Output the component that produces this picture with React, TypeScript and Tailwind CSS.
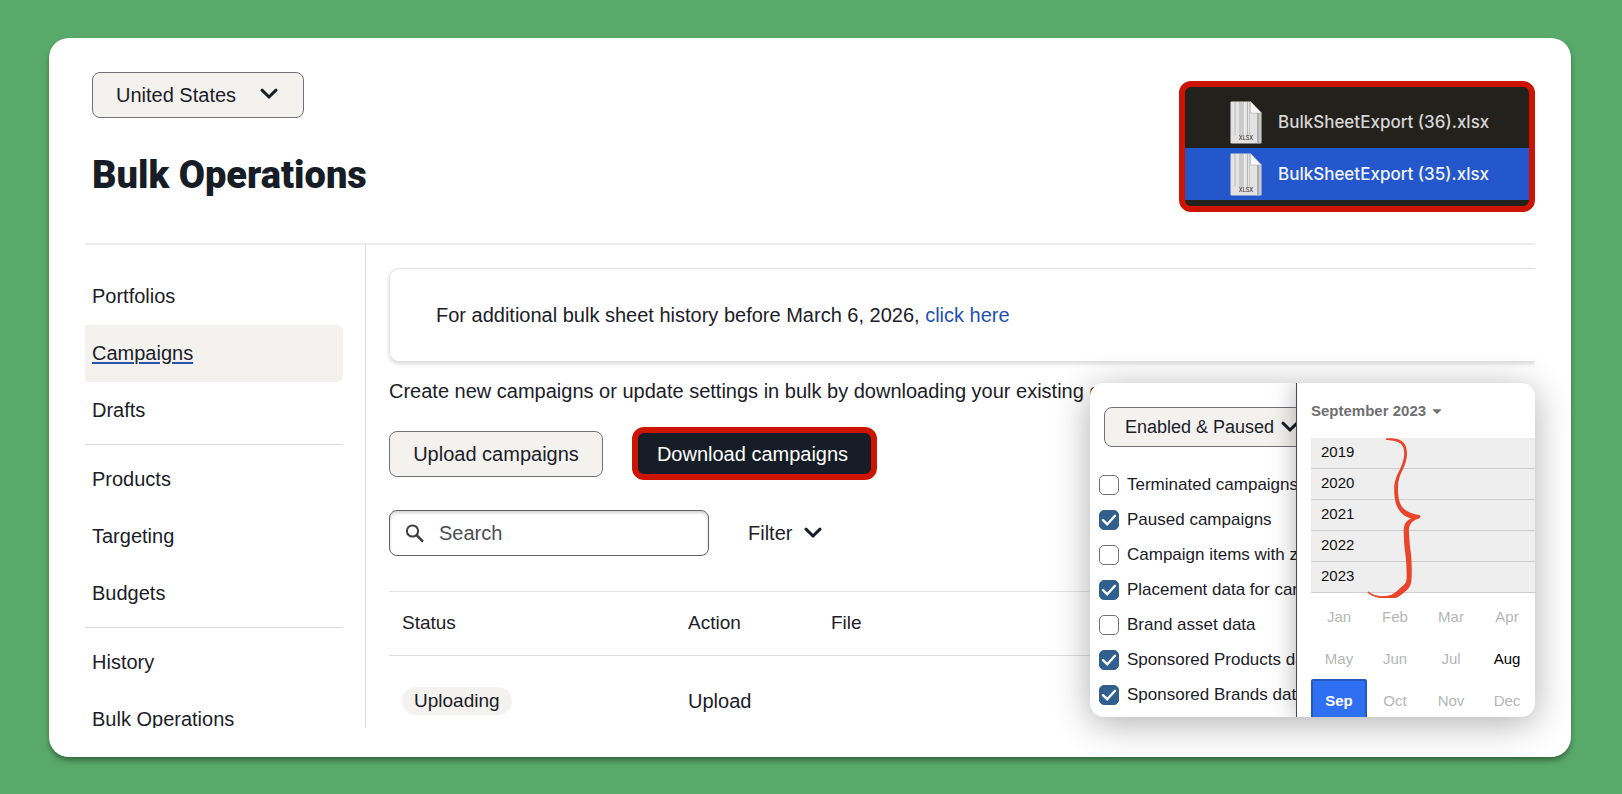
import { useState } from "react";
import { FaCaretDown } from "react-icons/fa";

const navGroups = [
  ["Portfolios", "Campaigns", "Drafts"],
  ["Products", "Targeting", "Budgets"],
  ["History", "Bulk Operations"],
];

const exportOptions = [
  { label: "Terminated campaigns", checked: false },
  { label: "Paused campaigns", checked: true },
  { label: "Campaign items with zero impressions", checked: false },
  { label: "Placement data for campaigns", checked: true },
  { label: "Brand asset data", checked: false },
  { label: "Sponsored Products data", checked: true },
  { label: "Sponsored Brands data", checked: true },
];

const years = ["2019", "2020", "2021", "2022", "2023"];
const months = ["Jan", "Feb", "Mar", "Apr", "May", "Jun", "Jul", "Aug", "Sep", "Oct", "Nov", "Dec"];

const Chevron = ({ className }: { className: string }) => (
  <svg viewBox="0 0 18 12" className={className} fill="none" aria-hidden="true">
    <path d="M2 2.2 L9 9 L16 2.2" stroke="#161d26" strokeWidth="3" strokeLinecap="round" />
  </svg>
);

const FileIcon = () => (
  <svg viewBox="0 0 32 43" className="h-[43px] w-8 shrink-0" aria-hidden="true">
    <path d="M1.5 0.5 H20.5 L31.5 12 V41.5 Q31.5 42.5 30.5 42.5 H1.5 Q0.5 42.5 0.5 41.5 V1.5 Q0.5 0.5 1.5 0.5 Z" fill="#e2e2e2" />
    <rect x="4" y="1" width="2" height="33" fill="#cfcfcf" />
    <rect x="9" y="1" width="5" height="33" fill="#cbcbcb" />
    <rect x="14" y="1" width="1" height="33" fill="#f2f2f2" />
    <rect x="17" y="1" width="1" height="33" fill="#b9b9b9" />
    <rect x="19" y="1" width="1" height="33" fill="#c9c9c9" />
    <rect x="27" y="12" width="2" height="30" fill="#adadad" />
    <rect x="29" y="12" width="2" height="30" fill="#c8c8c8" />
    <path d="M20.5 0.5 V12 H31.5 Z" fill="#fafafa" stroke="#a8a8a8" strokeWidth="0.5" />
    <text x="16" y="39" textAnchor="middle" fontSize="5.5" fontFamily="Inter, sans-serif" fill="#333">
      XLSX
    </text>
  </svg>
);

const Brace = () => (
  <svg viewBox="0 0 56 164" className="pointer-events-none absolute -top-1 left-[56px] h-[164px] w-14" aria-hidden="true">
    <path
      fill="#e8452a"
      d="M19 4.4 C29 4 40 5 40 19 C40.2 33 30.9 39 31 53 C31 68 33 77 49 80.4 Q54 80.4 53.4 83.2 Q53 84.4 49 85.6 C40 90 42 97 42.4 105 C43 117 45.4 120 44.6 145 C44.2 154 39 157 34 161 C27 166.4 21 165.5 14 164.2 C7 163 3 161 0.4 158.4 L1.2 157.6 C6 161.5 12 162.6 18 162 C25 161.6 28 159 32 155 C37 150.6 39.4 150 39.6 144 C40 121 37.2 118 37 105 C36.6 96 35.6 90 42 85.6 L44 84.4 C31 81 27 69 27.2 55 C27.6 39 37 34 37.2 19 C37.2 7.8 29 6.6 19 6 Z"
    />
  </svg>
);

const FileExports = () => (
  <div className="h-[131px] w-[356px] overflow-hidden rounded-xl border-6 border-[#cc1400] bg-[#23211c] font-[Inter,sans-serif] text-[17px] font-medium">
    <div className="flex h-[61px] items-end gap-4 pb-1 pl-[45px] text-[#d6d6d6]">
      <FileIcon />
      <span className="leading-[43px]">BulkSheetExport (36).xlsx</span>
    </div>
    <div className="flex h-[52px] items-end gap-4 bg-[#2457cc] pb-1 pl-[45px] text-[#f2f5fc]">
      <FileIcon />
      <span className="leading-[43px]">BulkSheetExport (35).xlsx</span>
    </div>
  </div>
);

const Sidebar = () => (
  <nav className="w-[281px] shrink-0 border-r border-[#dedede] pt-[23px] pr-[22px]">
    {navGroups.map((group, i) => (
      <ul key={i} className={i > 0 ? "mt-[5px] border-t border-[#dcdcdc] pt-[6px]" : ""}>
        {group.map((item) => (
          <li key={item}>
            <a
              href="#"
              className={
                item === "Campaigns"
                  ? "block rounded-r-md bg-[#f4f2ef] pl-[7px] leading-[57px] underline decoration-[#2a50a8] underline-offset-2"
                  : "block pl-[7px] leading-[57px]"
              }
            >
              {item}
            </a>
          </li>
        ))}
      </ul>
    ))}
  </nav>
);

const DownloadPanel = () => {
  const [options, setOptions] = useState(exportOptions);

  const toggle = (label: string) =>
    setOptions(options.map((o) => (o.label === label ? { ...o, checked: !o.checked } : o)));

  return (
    <div className="absolute right-9 bottom-10 flex h-[334px] w-[445px] overflow-hidden rounded-[14px] bg-white shadow-[0_6px_36px_rgba(0,0,0,0.32)]">
      <div className="w-[206px] shrink-0 overflow-hidden pt-6 pl-[9px]">
        <div className="relative ml-[5px] w-[220px]">
          <select
            aria-label="Campaign state"
            className="h-10 w-full appearance-none rounded-lg border border-[#6f7378] bg-[#f4f2ef] pl-5 text-lg"
          >
            <option>Enabled &amp; Paused</option>
          </select>
          <Chevron className="pointer-events-none absolute top-[14px] left-[177px] h-3 w-[18px]" />
        </div>
        <div className="mt-5 w-[340px] text-[17px]">
          {options.map((o) => (
            <label key={o.label} className="flex h-[35px] items-center gap-2">
              <span className="relative size-5">
                <input
                  type="checkbox"
                  checked={o.checked}
                  onChange={() => toggle(o.label)}
                  className="block size-5 appearance-none rounded-[5px] border border-[#6f7378] bg-white checked:border-[#31608f] checked:bg-[#31608f]"
                />
                {o.checked && (
                  <svg viewBox="0 0 20 20" className="pointer-events-none absolute inset-0" fill="none" aria-hidden="true">
                    <path d="M4 10.2 L8.2 14.2 L16 5.8" stroke="#fff" strokeWidth="2.4" strokeLinecap="round" />
                  </svg>
                )}
              </span>
              {o.label}
            </label>
          ))}
        </div>
      </div>
      <div className="relative min-w-0 flex-1 border-l border-[#4a4a4a] bg-white pl-[14px] text-[15px] text-[#111] shadow-[0_0_24px_rgba(0,0,0,0.3)]">
        <button className="flex h-[55px] items-center gap-1 font-bold text-[#707070]">
          September 2023
          <FaCaretDown className="size-[14px]" />
        </button>
        <div className="relative">
          <ul className="bg-[#eee]">
            {years.map((year) => (
              <li key={year} className="h-[31px] border-b border-[#ccc] pl-[10px] leading-[28px]">
                {year}
              </li>
            ))}
          </ul>
          <Brace />
        </div>
        <div className="grid grid-cols-4 pt-[2px]">
          {months.map((month) => (
            <button
              key={month}
              className={
                month === "Sep"
                  ? "h-[42px] rounded-t-[2px] border-2 border-[#2559bd] bg-[#2f6ff2] font-bold text-white"
                  : month === "Aug"
                    ? "h-[42px] text-black"
                    : "h-[42px] text-[#b5b5b5]"
              }
            >
              {month}
            </button>
          ))}
        </div>
      </div>
    </div>
  );
};

const CampaignTable = () => (
  <table className="mt-[35px] w-full table-fixed border-t border-[#e2e2e2] text-left">
    <thead>
      <tr className="h-16 border-b border-[#dedede] text-[19px]">
        <th className="w-[286px] pl-[13px] font-normal">Status</th>
        <th className="w-[143px] pl-[13px] font-normal">Action</th>
        <th className="pl-[13px] font-normal">File</th>
      </tr>
    </thead>
    <tbody>
      <tr className="h-[90px]">
        <td className="pl-[13px]">
          <span className="inline-block rounded-full bg-[#f4f2ef] px-3 text-[19px] leading-[28px]">Uploading</span>
        </td>
        <td className="pl-[13px]">Upload</td>
        <td />
      </tr>
    </tbody>
  </table>
);

export default function App() {
  return (
    <div className="flex h-screen bg-[#59aa6a] pt-[38px] pr-[51px] pb-[37px] pl-[49px] font-['Liberation_Sans',Arial,sans-serif] text-xl text-[#1b2028]">
      <div className="relative flex min-w-0 flex-1 flex-col rounded-[20px] bg-white px-9 pt-[34px] pb-[29px] shadow-[0_4px_6px_-1px_rgba(0,0,0,0.45)]">
        <header className="flex h-[173px] shrink-0 items-start justify-between border-b-2 border-[#ececec]">
          <div className="pl-[7px]">
            <div className="relative w-[212px]">
              <select
                aria-label="Country"
                className="block h-[46px] w-full appearance-none rounded-lg border border-[#6f7378] bg-[#f4f2ef] pl-[23px]"
              >
                <option>United States</option>
              </select>
              <Chevron className="pointer-events-none absolute top-4 left-[168px] h-3 w-[18px]" />
            </div>
            <h1 className="mt-[33px] font-[Roboto,sans-serif] text-[38px] leading-12 font-black text-[#161d26]">
              Bulk Operations
            </h1>
          </div>
          <div className="pt-[9px]">
            <FileExports />
          </div>
        </header>

        <div className="flex min-h-0 flex-1 overflow-hidden">
          <Sidebar />
          <main className="min-w-0 flex-1 pt-[23px] pl-[23px]">
            <div className="h-[94px] rounded-l-[10px] border border-r-0 border-[#e2e2e2] pl-[46px] leading-[92px] shadow-[0_2px_4px_rgba(0,0,0,0.15)]">
              For additional bulk sheet history before March 6, 2026,{" "}
              <a href="#" className="text-[#1f4fb8]">
                click here
              </a>
            </div>
            <p className="mt-4 truncate leading-[26px]">
              Create new campaigns or update settings in bulk by downloading your existing campaigns.{" "}
              <a href="#" className="text-[#2f6db5]">
                Learn more about bulk operations
              </a>
            </p>
            <div className="mt-[23px] flex items-center gap-[29px]">
              <button className="h-[46px] w-[214px] rounded-lg border border-[#6f7378] bg-[#f4f2ef]">
                Upload campaigns
              </button>
              <button className="h-[53px] w-[245px] rounded-xl border-6 border-[#cc1400] bg-[#161d26] pr-1 text-white">
                Download campaigns
              </button>
            </div>
            <div className="mt-[30px] flex items-center gap-[39px]">
              <div className="relative w-80">
                <input
                  type="text"
                  aria-label="Search"
                  placeholder="Search"
                  className="block h-[46px] w-full rounded-lg border border-[#5f6368] bg-white pl-[49px] shadow-[inset_0_2px_3px_rgba(0,0,0,0.18)] placeholder:text-[#4a4d52]"
                />
                <svg viewBox="0 0 20 20" className="pointer-events-none absolute top-[14px] left-4 size-5" fill="none" aria-hidden="true">
                  <circle cx="7.5" cy="7" r="5.6" stroke="#3a3d42" strokeWidth="2" />
                  <path d="M11.6 11.2 L18 17.6" stroke="#3a3d42" strokeWidth="2.6" />
                </svg>
              </div>
              <button className="flex items-center gap-3">
                Filter
                <Chevron className="h-3 w-[18px]" />
              </button>
            </div>
            <CampaignTable />
          </main>
        </div>

        <DownloadPanel />
      </div>
    </div>
  );
}
